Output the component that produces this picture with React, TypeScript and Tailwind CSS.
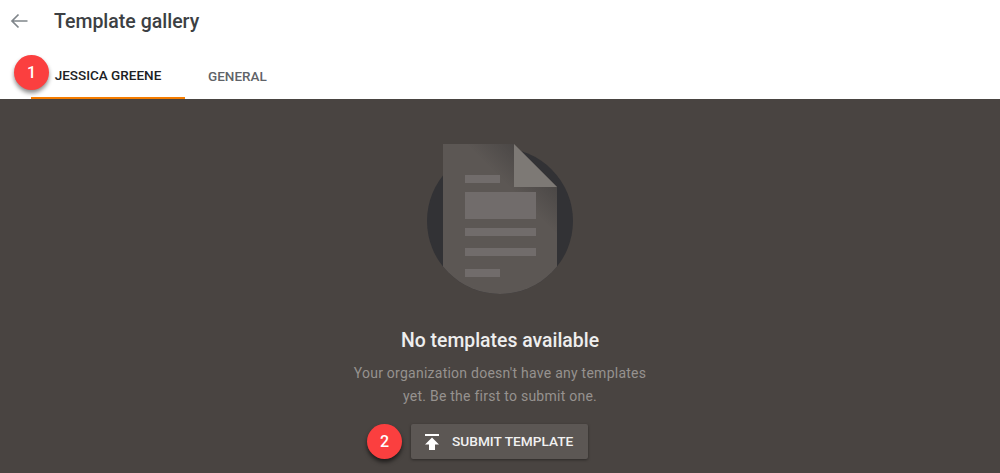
export default function App() {
  return (
    <div className="relative h-[473px] w-[1000px] overflow-hidden bg-[#494441] font-['Roboto',sans-serif]">
      <header className="relative h-[99px] bg-white">
        <div className="flex h-[42px] items-center">
          <svg className="ml-[10px] h-[16px] w-[18px]" viewBox="0 0 18 16" fill="none" stroke="#80868b" strokeWidth="1.7">
            <path d="M17.5 8H2M8.5 1.5L2 8l6.5 6.5" />
          </svg>
          <h1 className="ml-[26px] mt-[2px] text-[19.5px] font-medium leading-none text-[#3c4043]">Template gallery</h1>
        </div>
        <nav className="ml-[31px] flex h-[57px] text-[13.5px] font-medium">
          <div className="flex w-[154px] items-center justify-center border-b-2 border-[#f57c00] pt-[11px] text-[#202124]">JESSICA GREENE</div>
          <div className="ml-[23px] flex items-center pt-[11px] text-[#5f6368]">GENERAL</div>
        </nav>
      </header>
      <main className="flex flex-col items-center">
        <svg className="mt-[45px] h-[151px] w-[146px]" viewBox="0 0 146 151">
          <defs>
            <clipPath id="disc">
              <circle cx="73" cy="77" r="73" />
              <rect x="0" y="0" width="146" height="77" />
            </clipPath>
            <linearGradient id="shade" gradientUnits="userSpaceOnUse" x1="108" y1="21" x2="84" y2="45">
              <stop offset="0" stopColor="#3a3838" stopOpacity="0.5" />
              <stop offset="1" stopColor="#3a3838" stopOpacity="0" />
            </linearGradient>
          </defs>
          <circle cx="73" cy="77" r="73" fill="#323235" />
          <g clipPath="url(#disc)">
            <path d="M16 0H87L130 43V151H16Z" fill="#5c5754" />
            <path d="M16 0H87L130 43V151H16Z" fill="url(#shade)" />
          </g>
          <path d="M87 0L130 43H87Z" fill="#7d7975" />
          <g fill="#716c6b">
            <rect x="38" y="31" width="35" height="8" />
            <rect x="38" y="48" width="71" height="27" />
            <rect x="38" y="84" width="71" height="8" />
            <rect x="38" y="104" width="71" height="8" />
            <rect x="38" y="125" width="35" height="8" />
          </g>
        </svg>
        <h2 className="mt-[34px] text-[19.4px] font-medium leading-[24px] text-[#eeeeee]">No templates available</h2>
        <p className="mt-[9px] w-[300px] text-center text-[14px] leading-[23px] tracking-[0.25px] text-[#96928f]">
          Your organization doesn't have any templates yet. Be the first to submit one.
        </p>
        <button className="mt-[16px] ml-[-1px] flex h-[35px] w-[177px] items-center rounded-[2px] bg-[#5c5754] pl-[14px] text-[13.7px] font-medium text-[#f1f1f1] shadow-[0_1px_3px_rgba(0,0,0,0.4)]">
          <svg className="h-[16px] w-[14px]" viewBox="0 0 14 16" fill="#ffffff">
            <path d="M0 0H14V2H0ZM7 3.5L14 10.5H10V16H4V10.5H0Z" />
          </svg>
          <span className="ml-[13px]">SUBMIT TEMPLATE</span>
        </button>
      </main>
      <div className="absolute left-[14px] top-[55px] flex h-[35px] w-[35px] items-center justify-center rounded-full bg-[#fb3f3f] text-[16px] font-medium text-white shadow-[0_3px_4px_rgba(0,0,0,0.45)]">1</div>
      <div className="absolute left-[367px] top-[424px] flex h-[35px] w-[35px] items-center justify-center rounded-full bg-[#fb3f3f] text-[16px] font-medium text-white shadow-[0_3px_4px_rgba(0,0,0,0.6)]">2</div>
    </div>
  );
}
